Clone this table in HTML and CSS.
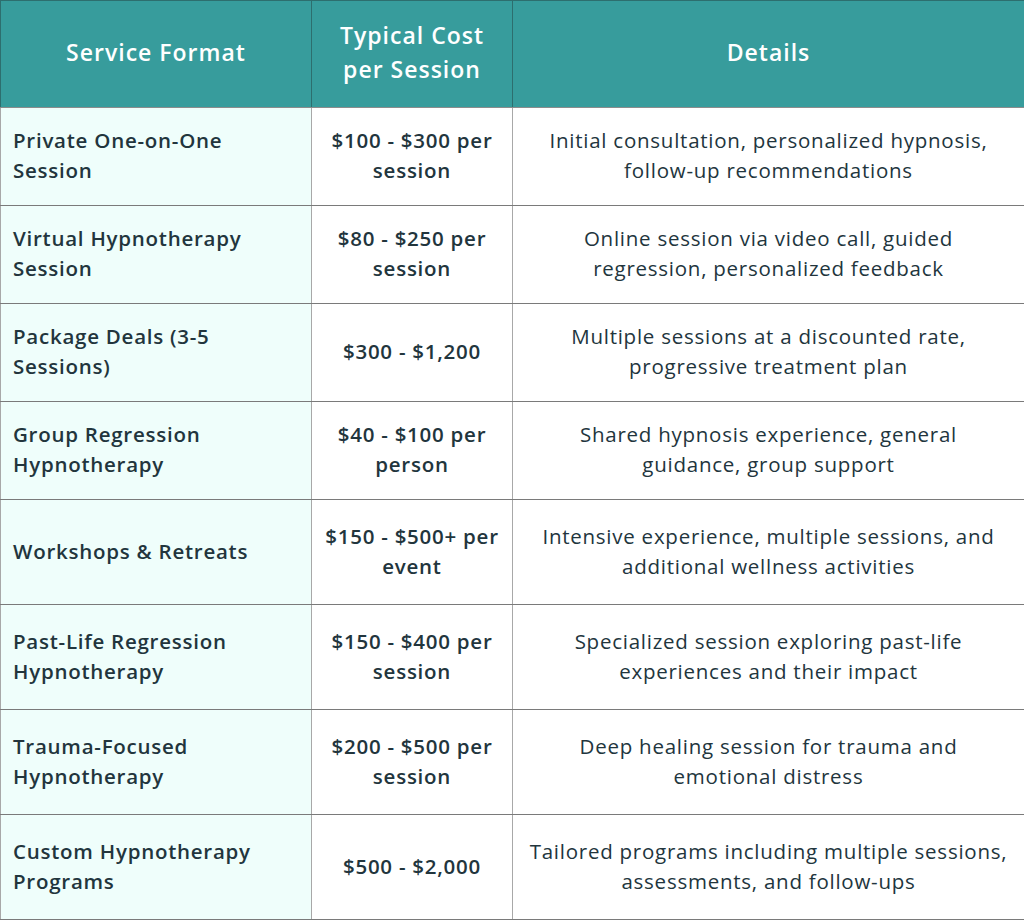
FILE: index.html
```html
<!DOCTYPE html>
<html>
<head>
<meta charset="utf-8">
<link rel="stylesheet" href="styles.css">
</head>
<body>
<table class="pricing">
  <colgroup>
    <col class="c1"><col class="c2"><col class="c3">
  </colgroup>
  <thead>
    <tr class="head-row">
      <th>Service Format</th>
      <th>Typical Cost<br>per Session</th>
      <th>Details</th>
    </tr>
  </thead>
  <tbody>
    <tr class="row-s">
      <td class="fmt">Private One-on-One<br>Session</td>
      <td class="cost">$100 - $300 per<br>session</td>
      <td class="det">Initial consultation, personalized hypnosis,<br>follow-up recommendations</td>
    </tr>
    <tr class="row-s">
      <td class="fmt">Virtual Hypnotherapy<br>Session</td>
      <td class="cost">$80 - $250 per<br>session</td>
      <td class="det">Online session via video call, guided<br>regression, personalized feedback</td>
    </tr>
    <tr class="row-s">
      <td class="fmt">Package Deals (3-5<br>Sessions)</td>
      <td class="cost">$300 - $1,200</td>
      <td class="det">Multiple sessions at a discounted rate,<br>progressive treatment plan</td>
    </tr>
    <tr class="row-s">
      <td class="fmt">Group Regression<br>Hypnotherapy</td>
      <td class="cost">$40 - $100 per<br>person</td>
      <td class="det">Shared hypnosis experience, general<br>guidance, group support</td>
    </tr>
    <tr class="row-l">
      <td class="fmt">Workshops &amp; Retreats</td>
      <td class="cost">$150 - $500+ per<br>event</td>
      <td class="det">Intensive experience, multiple sessions, and<br>additional wellness activities</td>
    </tr>
    <tr class="row-l">
      <td class="fmt">Past-Life Regression<br>Hypnotherapy</td>
      <td class="cost">$150 - $400 per<br>session</td>
      <td class="det">Specialized session exploring past-life<br>experiences and their impact</td>
    </tr>
    <tr class="row-l">
      <td class="fmt">Trauma-Focused<br>Hypnotherapy</td>
      <td class="cost">$200 - $500 per<br>session</td>
      <td class="det">Deep healing session for trauma and<br>emotional distress</td>
    </tr>
    <tr class="row-l">
      <td class="fmt">Custom Hypnotherapy<br>Programs</td>
      <td class="cost">$500 - $2,000</td>
      <td class="det">Tailored programs including multiple sessions,<br>assessments, and follow-ups</td>
    </tr>
  </tbody>
</table>
</body>
</html>
```
FILE: styles.css
```css
html, body {
  margin: 0;
  padding: 0;
  background: #ffffff;
}
body {
  font-family: "Open Sans", "Liberation Sans", sans-serif;
  color: #22353d;
}
.pricing {
  width: 1024px;
  border-collapse: collapse;
  table-layout: fixed;
}
.c1 { width: 311px; }
.c2 { width: 201px; }
.c3 { width: 512px; }
.pricing th {
  background: #379c9c;
  color: #ffffff;
  font-weight: 600;
  font-size: 23px;
  line-height: 34px;
  letter-spacing: 1px;
  text-align: center;
  border: 1px solid #2d6e6e;
  border-bottom: 1px solid #8c8c8c;
  height: 101px;
  padding: 0 0 5px 0;
}
.pricing td {
  border-left: 1px solid #a8a8a8;
  border-right: 1px solid #a8a8a8;
  border-top: 1px solid #7a7a7a;
  border-bottom: 1px solid #7a7a7a;
  font-size: 20.5px;
  line-height: 30px;
  letter-spacing: 0.75px;
  padding: 0 12px 3px 12px;
  vertical-align: middle;
}
.row-s td { height: 94px; }
.row-l td { height: 101px; }
.fmt {
  background: #effefb;
  font-weight: 600;
  text-align: left;
}
.cost {
  font-weight: 600;
  text-align: center;
}
.det {
  font-weight: 400;
  text-align: center;
}
```
